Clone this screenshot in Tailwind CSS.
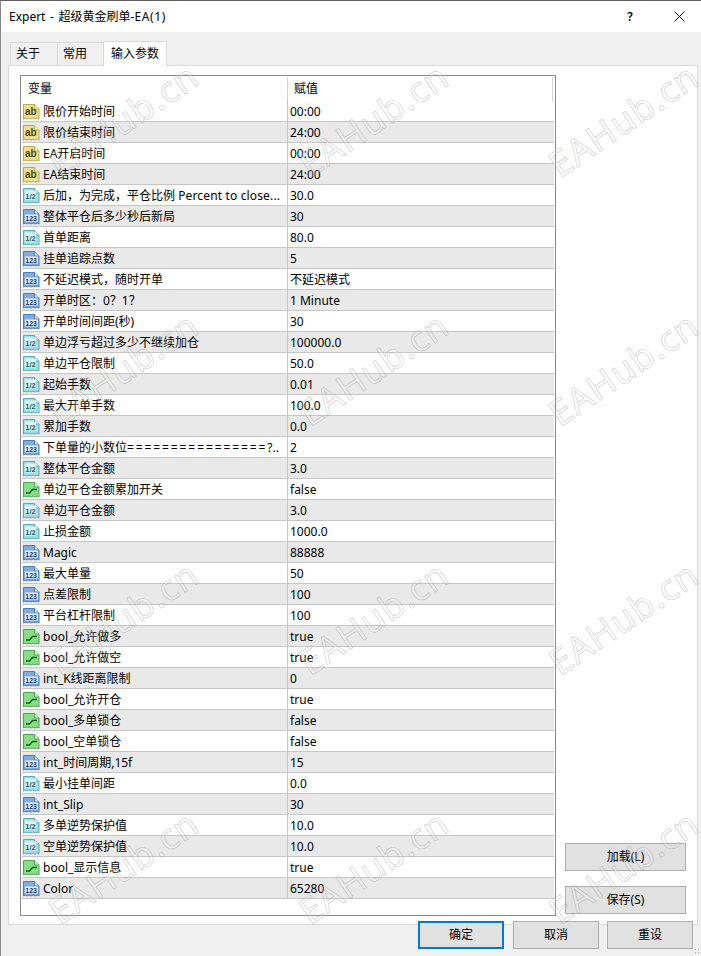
<!DOCTYPE html>
<html lang="zh">
<head>
    <meta charset="UTF-8">
    <title>Expert - 超级黄金刷单-EA(1)</title>
    <script src="https://cdn.jsdelivr.net/npm/@tailwindcss/browser@4"></script>
</head>
<body class="bg-[#f0f0f0]">
    <!-- icon sheet -->
    <svg class="hidden">
        <symbol id="ico-ab" viewBox="0 0 17 17">
            <path d="M0.5 1.5H11.5L16 6V16L14 15L12 16L10 15L8 16L6 15L4 16L2 15L0.5 16Z" fill="#efe08f" stroke="#bba94a"/>
            <path d="M11.5 1.5V6H16" fill="#fff8d0" stroke="#bba94a"/>
            <text x="2" y="12" font-size="10" font-weight="700" fill="#4a4420" font-family="Liberation Sans">ab</text>
        </symbol>
        <symbol id="ico-half" viewBox="0 0 17 17">
            <path d="M0.5 1.5H11.5L16 6V16L14 15L12 16L10 15L8 16L6 15L4 16L2 15L0.5 16Z" fill="#9fe0e6" stroke="#54aeb9"/>
            <path d="M11.5 1.5V6H16" fill="#e2f8fa" stroke="#54aeb9"/>
            <rect x="2" y="3.5" width="11" height="9" fill="#d8f5f7"/>
            <text x="2.3" y="11.5" font-size="7.5" font-weight="700" fill="#1c5a66" font-family="Liberation Sans">1/2</text>
        </symbol>
        <symbol id="ico-int" viewBox="0 0 17 17">
            <path d="M0.5 1.5H11.5L16 6V16L14 15L12 16L10 15L8 16L6 15L4 16L2 15L0.5 16Z" fill="#7faae2" stroke="#4a7cba"/>
            <path d="M11.5 1.5V6H16" fill="#dcebfa" stroke="#4a7cba"/>
            <rect x="2" y="6.5" width="13" height="7" fill="#e4effb"/>
            <text x="2.3" y="12.5" font-size="7" font-weight="700" fill="#17365f" font-family="Liberation Sans">123</text>
        </symbol>
        <symbol id="ico-bool" viewBox="0 0 17 17">
            <path d="M0.5 1.5H11.5L16 6V16L14 15L12 16L10 15L8 16L6 15L4 16L2 15L0.5 16Z" fill="#86df86" stroke="#49a84c"/>
            <path d="M11.5 1.5V6H16" fill="#dcf8dc" stroke="#49a84c"/>
            <path d="M3 12H6.5L9.5 8.5H14" fill="none" stroke="#14591a" stroke-width="1.4"/>
        </symbol>
    </svg>

    <div class="relative w-[701px] h-[956px] overflow-hidden flex flex-col border-t border-t-[#5f5f5f] border-l border-l-[#8a8a8a] text-[12px] leading-none text-black font-['Noto_Sans','Noto_Sans_CJK_SC',sans-serif]">
        <!-- Title bar -->
        <div class="h-[31px] shrink-0 bg-white flex items-center pl-[8px]">
            <span class="flex-1 pt-px [word-spacing:1.5px]">Expert - 超级黄金刷单-<span class="tracking-[0.6px]">EA(1)</span></span>
            <span class="w-[12px] text-center mr-[38px] font-semibold">?</span>
            <svg class="w-[11px] h-[11px] mr-[16px]" viewBox="0 0 11 11"><path d="M0.5 0.5L10.5 10.5M10.5 0.5L0.5 10.5" stroke="#111" stroke-width="1" fill="none"/></svg>
        </div>

        <!-- Tabs -->
        <div class="h-[33px] shrink-0 flex items-end pl-[9px]">
            <div class="w-[48px] h-[23px] pl-[5px] flex items-center border border-b-0 border-[#d9d9d9]">关于</div>
            <div class="w-[47px] h-[23px] pl-[5px] -ml-px flex items-center border border-b-0 border-[#d9d9d9]">常用</div>
            <div class="w-[64px] h-[25px] pl-[7px] -mb-px -ml-px relative z-10 bg-white flex items-center border border-b-0 border-[#d9d9d9]">输入参数</div>
        </div>

        <!-- Tab panel -->
        <div class="ml-[7px] w-[690px] h-[860px] shrink-0 bg-white border border-[#d9d9d9] pl-[11px] pt-[9px] flex">
            <div class="w-[536px] h-[841px] shrink-0 border border-[#8b8b8f] p-px flex flex-col">
                <div class="h-[24px] shrink-0 grid grid-cols-[266px_1fr] items-center">
                    <div class="pl-[6px] h-full flex items-center border-r border-[#d4d4d4]">变量</div>
                    <div class="pl-[6px] h-full flex items-center border-r border-[#d4d4d4] mr-px">赋值</div>
                </div>
                <div id="rows"></div>
            </div>
            <div class="ml-[9px] w-[121px] h-[841px] flex flex-col justify-end gap-[15px] pb-[2px]">
                <button class="h-[28px] bg-[#e1e1e1] border border-[#adadad]">加载(L)</button>
                <button class="h-[28px] bg-[#e1e1e1] border border-[#adadad]">保存(S)</button>
            </div>
        </div>

        <!-- Dialog buttons -->
        <div class="-mt-[4px] relative flex pl-[417px] gap-[9px]">
            <button class="w-[86px] h-[28px] bg-[#e1e1e1] border-2 border-[#0078d7]">确定</button>
            <button class="w-[86px] h-[28px] bg-[#e1e1e1] border border-[#adadad]">取消</button>
            <button class="w-[86px] h-[28px] -ml-px bg-[#e1e1e1] border border-[#adadad]">重设</button>
        </div>

        <!-- Size grip -->
        <div class="absolute right-[1px] bottom-[1px] w-[6px] h-[7px] bg-[radial-gradient(#a0a0a0_1px,transparent_1px)] bg-[length:3px_3px]"></div>

        <!-- EAHub watermark -->
        <div id="marks" class="absolute left-[-2px] top-[-6px] grid grid-cols-[repeat(3,250px)] grid-rows-[repeat(4,249px)] place-items-center pointer-events-none"></div>
    </div>

    <script>
        var rows = [
            ['ab', '限价开始时间', '00:00'],
            ['ab', '限价结束时间', '24:00'],
            ['ab', 'EA开启时间', '00:00'],
            ['ab', 'EA结束时间', '24:00'],
            ['half', '后加，为完成，平仓比例 <span class="tracking-[0.15px]">Percent to close...</span>', '30.0'],
            ['int', '整体平仓后多少秒后新局', '30'],
            ['half', '首单距离', '80.0'],
            ['int', '挂单追踪点数', '5'],
            ['int', '不延迟模式，随时开单', '不延迟模式'],
            ['int', '开单时区：0？1？', '1 Minute'],
            ['int', '开单时间间距(秒)', '30'],
            ['half', '单边浮亏超过多少不继续加仓', '100000.0'],
            ['half', '单边平仓限制', '50.0'],
            ['half', '起始手数', '0.01'],
            ['half', '最大开单手数', '100.0'],
            ['half', '累加手数', '0.0'],
            ['int', '下单量的小数位<span class="tracking-[1.9px]">================</span>?..', '2'],
            ['half', '整体平仓金额', '3.0'],
            ['bool', '单边平仓金额累加开关', 'false'],
            ['half', '单边平仓金额', '3.0'],
            ['half', '止损金额', '1000.0'],
            ['int', 'Magic', '88888'],
            ['int', '最大单量', '50'],
            ['int', '点差限制', '100'],
            ['int', '平台杠杆限制', '100'],
            ['bool', 'bool_允许做多', 'true'],
            ['bool', 'bool_允许做空', 'true'],
            ['int', 'int_K线距离限制', '0'],
            ['bool', 'bool_允许开仓', 'true'],
            ['bool', 'bool_多单锁仓', 'false'],
            ['bool', 'bool_空单锁仓', 'false'],
            ['int', 'int_时间周期,15f', '15'],
            ['half', '最小挂单间距', '0.0'],
            ['int', 'int_Slip', '30'],
            ['half', '多单逆势保护值', '10.0'],
            ['half', '空单逆势保护值', '10.0'],
            ['bool', 'bool_显示信息', 'true'],
            ['int', 'Color', '65280']
        ];

        document.getElementById('rows').innerHTML = rows.map(function (r, i) {
            var bg = i % 2 ? 'bg-[#e9e9e9]' : 'bg-white';
            return '<div class="h-[21px] grid grid-cols-[266px_1fr] border-b border-[#c6c6c6] ' + bg + '">' +
                '<div class="flex items-center pl-px border-r border-[#c6c6c6] whitespace-nowrap overflow-hidden">' +
                '<svg class="w-[17px] h-[17px] shrink-0 mr-[3px]"><use href="#ico-' + r[0] + '"/></svg><span class="pt-[2px]">' + r[1] + '</span></div>' +
                '<div class="flex items-center pl-[2px] pt-[2px]">' + r[2] + '</div></div>';
        }).join('');

        var mark = '<span class="-rotate-[34deg] whitespace-nowrap text-[36px] leading-none tracking-[1px] text-white/20 [-webkit-text-stroke:0.7px_rgba(130,130,130,0.4)] font-[\'Liberation_Sans\',sans-serif]">EAHub.cn</span>';
        document.getElementById('marks').innerHTML = new Array(13).join(mark);
    </script>
</body>
</html>
